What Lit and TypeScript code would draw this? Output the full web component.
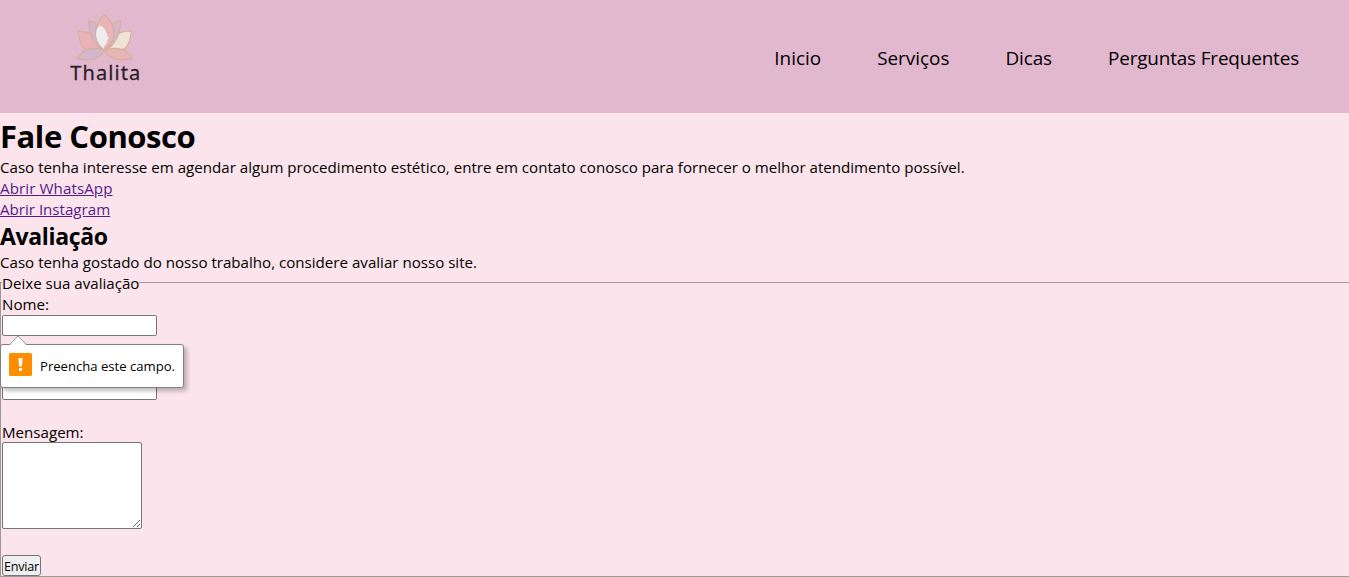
import { LitElement, html, css, svg } from "lit";
import { customElement } from "lit/decorators.js";

@customElement("lotus-logo")
class LotusLogo extends LitElement {
  static styles = css`
    :host { display: block; width: 90px; height: 85px; }
    svg { display: block; }
    .petal { stroke: #d3b297; stroke-width: 3.5; stroke-linejoin: round; }
    .pink { fill: #e9b3b8; }
    .lilac { fill: #d3b5cf; }
    .cream { fill: #efe3d3; }
    .face { fill: #eeecec; }
    .name { font-family: "Noto Sans", sans-serif; font-size: 60px; fill: #29212a; stroke: #29212a; stroke-width: 0.8; }
  `;
  render() {
    return html`<svg width="90" height="85" viewBox="0 0 270 255">
      ${svg`
      <path class="petal lilac" d="M134 137C116 124 92 130 76 136Q66 140 52 161C76 166 112 171 134 137Z"/>
      <path class="petal pink" d="M134 137C152 124 176 130 192 136Q204 142 216 161C192 166 156 171 134 137Z"/>
      <path class="petal pink" d="M134 136C122 97 93 78 54 78C58 110 66 133 83 133Q112 126 134 136Z"/>
      <path class="petal cream" d="M134 136C146 97 175 78 214 78C210 110 202 133 185 133Q156 126 134 136Z"/>
      <path class="petal lilac" d="M134 136C107 127 85 88 86 47Q101 49 114 60L134 136Z"/>
      <path class="petal lilac" d="M134 136C161 127 183 88 182 47Q167 49 154 60L134 136Z"/>
      <path class="petal pink" d="M134 28C149 42 162 64 162 88Q160 115 134 136Q107 113 106 84C107 61 119 42 134 28Z"/>
      <path class="face" d="M119 61Q133 67 138 80L140 88L147 101L141 105L143 110L139 113L138 119Q132 120 131 132Q106 108 108 83Q110 70 119 61Z"/>
      <text class="name" x="31" y="225" textLength="210" lengthAdjust="spacing">Thalita</text>`}
    </svg>`;
  }
}

@customElement("app-root")
class AppRoot extends LitElement {
  static styles = css`
    * { box-sizing: border-box; margin: 0; padding: 0; }
    :host {
      display: block; height: 577px; overflow: hidden; background: #fbe4eb; color: #000;
      font-family: "Open Sans", "Noto Sans", sans-serif; font-size: 15.12px; line-height: 21px;
    }
    header {
      height: 113px; background: #e2b8cf; display: flex; justify-content: space-between;
      align-items: flex-start; padding: 5px 50px 0 60px;
    }
    nav { display: flex; gap: 56px; padding-top: 40px; font-size: 18.9px; line-height: 26px; }
    nav a { white-space: nowrap; }
    nav a:nth-child(3) { letter-spacing: -0.1px; }
    nav a:last-child { letter-spacing: -0.15px; }
    h1 { font-size: 31px; line-height: 44px; height: 44px; padding-top: 1px; letter-spacing: -0.44px; white-space: nowrap; }
    h2 { font-size: 23px; line-height: 32px; height: 32px; letter-spacing: -0.35px; }
    p, .link { display: block; height: 21px; white-space: nowrap; }
    .link a { color: #551a8b; text-decoration: underline; }
    .link:nth-of-type(1) a { letter-spacing: 0.1px; }
    fieldset {
      border: 1px solid #999; border-right: 0; width: 100%; min-width: 0;
      padding: 0 1px; height: 304px; display: block;
    }
    legend { height: 19px; margin-bottom: 2px; white-space: nowrap; }
    label { display: block; height: 21px; }
    input, textarea { display: block; background: #fff; border: 1px solid #767676; border-radius: 2px; outline: 0; }
    input { width: 155px; height: 21px; }
    .field { position: relative; margin-bottom: 22px; }
    .second { margin-bottom: 22px; }
    textarea { width: 140px; height: 87px; margin-top: -1px; resize: both; }
    button {
      display: block; width: 39px; height: 21px; margin-top: 26px; padding-top: 1px; background: #efefef;
      border: 1px solid #767676; border-radius: 3px; font: 12.6px/19px "Open Sans", sans-serif;
      letter-spacing: -0.2px; color: #000; white-space: nowrap;
    }
    .tip {
      position: absolute; z-index: 2; left: -2px; top: 50px; width: 184px; height: 44px;
      display: flex; align-items: center; gap: 8px; padding: 0 8px 3px; background: #fff;
      border: 1px solid #808080; border-radius: 3px; box-shadow: 3px 3px 4px rgba(0, 0, 0, 0.25);
      font-size: 13.1px; white-space: nowrap;
    }
    .tip svg { display: block; flex: none; }
    .tip .arrow { position: absolute; left: 8px; top: -10px; }
    .msg { padding-top: 3px; }
  `;
  render() {
    return html`
      <header>
        <lotus-logo></lotus-logo>
        <nav><a>Inicio</a><a>Serviços</a><a>Dicas</a><a>Perguntas Frequentes</a></nav>
      </header>
      <main>
        <h1>Fale Conosco</h1>
        <p>Caso tenha interesse em agendar algum procedimento estético, entre em contato conosco para fornecer o melhor atendimento possível.</p>
        <div class="link"><a>Abrir WhatsApp</a></div>
        <div class="link"><a>Abrir Instagram</a></div>
        <h2>Avaliação</h2>
        <p>Caso tenha gostado do nosso trabalho, considere avaliar nosso site.</p>
        <fieldset>
          <legend>Deixe sua avaliação</legend>
          <div class="field">
            <label>Nome:</label>
            <input type="text" />
            <div class="tip">
              <svg class="arrow" width="18" height="11" viewBox="0 0 18 11"><path d="M0 11L9 1.5L18 11Z" fill="#fff"/><path d="M0.5 9.7L9 1L17.5 9.7" fill="none" stroke="#999"/></svg>
              <svg width="23" height="23" viewBox="0 0 23 23"><rect width="23" height="23" rx="1.5" fill="#ff8d00"/><path d="M9.5 5H13.5L13 13.5H10Z M10 15H13V18H10Z" fill="#fff"/></svg>
              <span class="msg">Preencha este campo.</span>
            </div>
          </div>
          <div class="second"><label></label><input type="text" /></div>
          <label>Mensagem:</label>
          <textarea></textarea>
          <button>Enviar</button>
        </fieldset>
      </main>`;
  }
}
